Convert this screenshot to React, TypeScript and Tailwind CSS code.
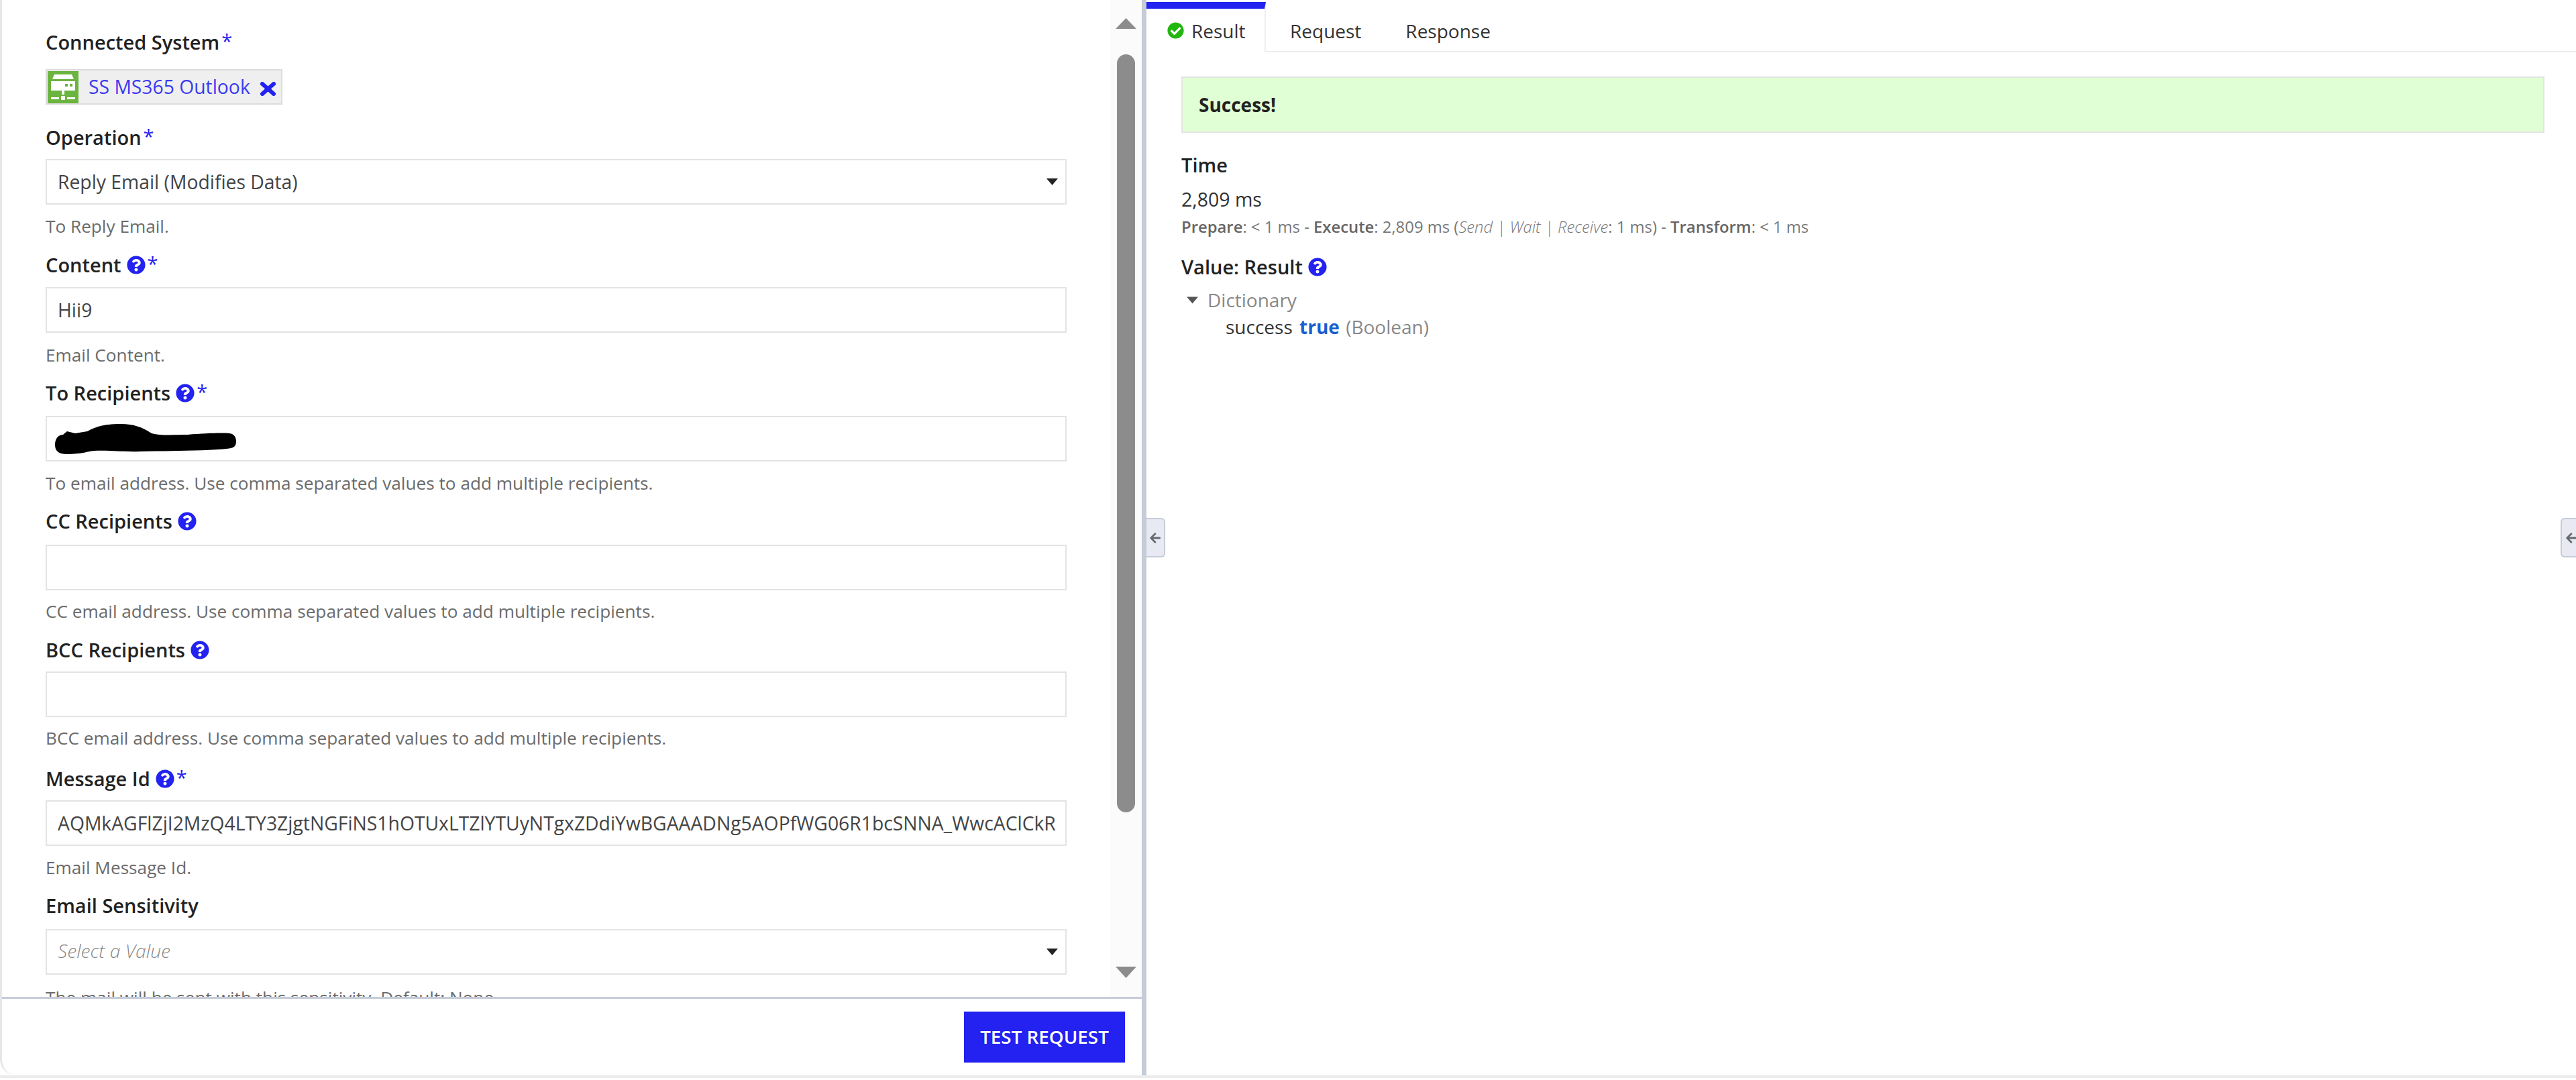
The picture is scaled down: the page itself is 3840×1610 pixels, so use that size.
import React from "react";
import { FaQuestionCircle, FaCheckCircle, FaArrowLeft } from "react-icons/fa";

const Q = () => <FaQuestionCircle className="inline-block text-[#2322f0] w-[28px] h-[28px] ml-[8px] shrink-0" />;
const Star = () => <span className="text-[#2322f0] font-normal ml-[3px] relative top-[-2px]">*</span>;

function Label({ text, help, req }: { text: string; help?: boolean; req?: boolean }) {
  return (
    <div className="flex items-center h-[40px] shrink-0 text-[29px] font-semibold text-[#222222] leading-[40px]">
      <span>{text}</span>
      {help && <Q />}
      {req && <Star />}
    </div>
  );
}

const Caret = () => (
  <svg viewBox="0 0 17 10" className="w-[17px] h-[10px] shrink-0">
    <path d="M0 0H17L8.5 10Z" fill="#222222" />
  </svg>
);

function Box({ children, select, gap }: { children?: React.ReactNode; select?: boolean; gap: string }) {
  return (
    <div className={`${gap} flex items-center justify-between h-[68px] shrink-0 border-2 border-[#e3e3e3] bg-white pl-[16px] pr-[11px] text-[28.3px] text-[#444444]`}>
      <div className="whitespace-nowrap min-w-0">{children}</div>
      {select && <Caret />}
    </div>
  );
}

function Field({
  label, help, req, hint, value, select, blob, boxGap, hintGap, after,
}: {
  label: string; help?: boolean; req?: boolean; hint: string; value?: React.ReactNode; select?: boolean; blob?: boolean;
  boxGap: string; hintGap: string; after: string;
}) {
  return (
    <div className={`${after} flex flex-col shrink-0`}>
      <Label text={label} help={help} req={req} />
      <Box select={select} gap={boxGap}>
        {blob ? (
          <svg viewBox="0 0 272 46" className="w-[272px] h-[46px] block -ml-[6px]">
            <path d="M2 32C2 22 8 17 14 17L20 12L32 15L50 12C62 6 72 1 100 1C120 1 132 6 146 15C160 19 180 17 200 17C225 15 250 14 262 15C270 16 272 22 272 27C272 35 268 37 258 38C230 41 180 41 130 42C100 43 88 40 60 41C50 42 42 46 20 46C8 46 2 42 2 32Z" fill="#000000" />
          </svg>
        ) : (
          value
        )}
      </Box>
      <div className={`${hintGap} h-[34px] shrink-0 leading-[34px] text-[26.2px] text-[#6b6b6b] whitespace-nowrap`}>{hint}</div>
    </div>
  );
}

function ChipIcon() {
  return (
    <svg viewBox="0 0 46 48" className="w-[46px] h-[48px] block shrink-0">
      <rect width="46" height="48" fill="#6bb43f" />
      <path d="M10 5H36L39 12H7Z" fill="#fff" />
      <path d="M5 15H41V29H25V35H21V29H5Z" fill="#fff" />
      <rect x="26" y="19" width="4" height="4" fill="#6bb43f" />
      <rect x="33" y="19" width="4" height="4" fill="#6bb43f" />
      <rect x="5" y="39" width="12" height="3" fill="#fff" />
      <rect x="20" y="37" width="6" height="6" fill="#fff" />
      <rect x="29" y="39" width="12" height="3" fill="#fff" />
    </svg>
  );
}

export default function App() {
  return (
    <div className="w-[3840px] h-[1610px] bg-white overflow-hidden" style={{ fontFamily: '"Open Sans", sans-serif' }}>
      <div className="flex h-[1607px] border-b-4 border-[#ececec] relative">
        <div className="w-[1709px] shrink-0 flex flex-col border-l-[3px] border-r-[7px] border-l-[#e6e6e6] border-r-[#c5ccd8] rounded-bl-[24px] overflow-hidden">
          <div className="flex h-[1486px] shrink-0 overflow-hidden">
            <div className="w-[1522px] ml-[65px] shrink-0 pt-[43px] flex flex-col">
              <Label text="Connected System" req />
              <div className="mt-[20px] mb-[29px] flex shrink-0">
                <div className="flex items-center h-[53px] w-[353px] bg-[#efefef] border-2 border-[#dcdcdc] pl-[1px] text-[28.3px] text-[#3b3bf0]">
                  <ChipIcon />
                  <span className="ml-[15px] whitespace-nowrap">SS MS365 Outlook</span>
                  <svg viewBox="0 0 23 21" className="ml-[15px] w-[23px] h-[21px] shrink-0 relative top-[3px]">
                    <path d="M3 3L20 18M20 3L3 18" stroke="#2322f0" strokeWidth="6" strokeLinecap="round" />
                  </svg>
                </div>
              </div>
              <Field label="Operation" req select value="Reply Email (Modifies Data)" hint="To Reply Email." boxGap="mt-[12px]" hintGap="mt-[15px]" after="mb-[21px]" />
              <Field label="Content" help req hint="Email Content." value="Hii9" boxGap="mt-[13px]" hintGap="mt-[16px]" after="mb-[20px]" />
              <Field label="To Recipients" help req blob hint="To email address. Use comma separated values to add multiple recipients." boxGap="mt-[14px]" hintGap="mt-[15px]" after="mb-[20px]" />
              <Field label="CC Recipients" help hint="CC email address. Use comma separated values to add multiple recipients." boxGap="mt-[15px]" hintGap="mt-[14px]" after="mb-[21px]" />
              <Field label="BCC Recipients" help hint="BCC email address. Use comma separated values to add multiple recipients." boxGap="mt-[12px]" hintGap="mt-[14px]" after="mb-[24px]" />
              <Field label="Message Id" help req hint="Email Message Id." value="AQMkAGFlZjI2MzQ4LTY3ZjgtNGFiNS1hOTUxLTZlYTUyNTgxZDdiYwBGAAADNg5AOPfWG06R1bcSNNA_WwcAClCkR" boxGap="mt-[12px]" hintGap="mt-[15px]" after="mb-[20px]" />
              <Field label="Email Sensitivity" select hint="The mail will be sent with this sensitivity. Default: None" value={<span className="italic font-light text-[#8a8a8a] relative top-[-2px]">Select a Value</span>} boxGap="mt-[15px]" hintGap="mt-[17px]" after="mb-[0px]" />
            </div>
            <div className="w-[47px] ml-auto bg-[#fbfbfb] flex flex-col items-center pt-[27px]">
              <svg viewBox="0 0 31 16" className="w-[31px] h-[16px] shrink-0">
                <path d="M15.5 0L31 16H0Z" fill="#8c8c8c" />
              </svg>
              <div className="mt-[38px] w-[27px] h-[1130px] rounded-full bg-[#8c8c8c] shrink-0" />
              <svg viewBox="0 0 31 17" className="mt-[230px] w-[31px] h-[17px] shrink-0">
                <path d="M0 0H31L15.5 17Z" fill="#8c8c8c" />
              </svg>
            </div>
          </div>
          <div className="flex-1 border-t-[3px] border-[#c5ccd8] flex justify-end items-start pt-[19px] pr-[25px]">
            <button className="w-[240px] h-[76px] bg-[#2322f0] text-white text-[27.8px] font-semibold uppercase">Test Request</button>
          </div>
        </div>

        <div className="flex-1 min-w-0 flex flex-col">
          <div className="flex h-[78px] border-b-2 border-[#eeeeee] text-[28px] text-[#333333] pt-[3px]">
            <div className="w-[178px] h-[75px] -mb-[2px] bg-white border-t-[10px] border-t-[#2322f0] border-r-2 border-r-[#eeeeee] flex items-center pl-[31px]">
              <FaCheckCircle className="w-[25px] h-[25px] text-[#22b60f] shrink-0" />
              <span className="ml-[11px]">Result</span>
            </div>
            <div className="h-[75px] pt-[10px] flex items-center ml-[36px]">Request</div>
            <div className="h-[75px] pt-[10px] flex items-center ml-[66px]">Response</div>
          </div>
          <div className="pl-[52px] pr-[47px] pt-[36px] flex flex-col">
            <div className="h-[84px] bg-[#e0ffd4] border-2 border-[#e2e6e0] flex items-center pl-[24px] text-[28px] font-bold text-[#222222]">Success!</div>
            <div className="mt-[28px] h-[40px] leading-[40px] text-[29px] font-semibold text-[#222222]">Time</div>
            <div className="mt-[11px] h-[40px] leading-[40px] text-[28.5px] text-[#333333]">2,809 ms</div>
            <div className="mt-[1px] h-[40px] leading-[40px] text-[23.85px] text-[#777777] whitespace-nowrap">
              <b className="font-semibold text-[#666666]">Prepare</b>: &lt; 1 ms - <b className="font-semibold text-[#666666]">Execute</b>: 2,809 ms (<i className="font-light">Send | Wait | Receive</i>: 1 ms) - <b className="font-semibold text-[#666666]">Transform</b>: &lt; 1 ms
            </div>
            <div className="mt-[20px] flex items-center h-[40px] text-[29px] font-semibold text-[#222222]">
              <span>Value: Result</span>
              <Q />
            </div>
            <div className="mt-[9px] flex items-center h-[40px] text-[28px] text-[#888888] pl-[8px]">
              <svg viewBox="0 0 17 10" className="w-[17px] h-[11px] shrink-0">
                <path d="M0 0H17L8.5 10Z" fill="#555555" />
              </svg>
              <span className="ml-[14px]">Dictionary</span>
            </div>
            <div className="h-[40px] leading-[40px] text-[28px] text-[#333333] pl-[66px] whitespace-nowrap">
              success <b className="font-bold ml-[3px] text-[#1b5fce]">true</b> <span className="text-[#888888] ml-[2px]">(Boolean)</span>
            </div>
          </div>
        </div>

        <div className="absolute left-[1709px] top-[772px] w-[28px] h-[59px] bg-[#e8e9f2] border-2 border-l-0 border-[#c5ccd8] rounded-r-[6px] flex items-center justify-center">
          <FaArrowLeft className="w-[18px] h-[18px] text-[#666a70]" />
        </div>
        <div className="absolute left-[3817px] top-[772px] w-[23px] h-[59px] bg-[#e8e9f2] border-2 border-r-0 border-[#c5ccd8] rounded-l-[6px] flex items-center pl-[5px] overflow-hidden">
          <FaArrowLeft className="w-[18px] h-[18px] shrink-0 text-[#666a70]" />
        </div>
      </div>
    </div>
  );
}
